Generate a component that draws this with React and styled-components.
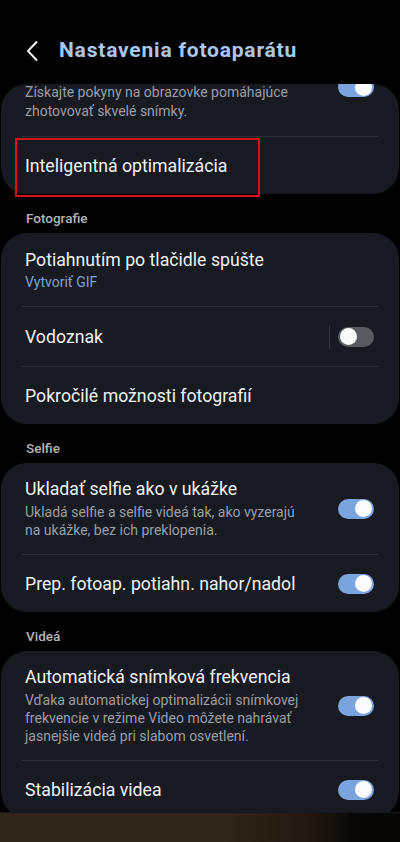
import styled, { createGlobalStyle } from "styled-components";

const GlobalStyle = createGlobalStyle`
  html, body {
    margin: 0;
    padding: 0;
    background: #000;
  }
  body {
    font-family: Roboto, "Noto Sans", "Liberation Sans", sans-serif;
    -webkit-font-smoothing: antialiased;
  }
`

const Page = styled.div`
  width: 400px;
  height: 842px;
  display: flex;
  flex-direction: column;
  background: #000;
  overflow: hidden;
`

const Header = styled.div`
  height: 84px;
  flex-shrink: 0;
  display: flex;
  align-items: center;
  padding: 16px 0 0 22px;
  box-sizing: border-box;
  gap: 17px;
`

const BackBtn = styled.button`
  width: 20px;
  height: 24px;
  padding: 0;
  border: 0;
  background: none;
  display: flex;
  align-items: center;
  justify-content: center;
  margin-top: 1px;
`

const Title = styled.h1`
  margin: 0;
  font-size: 21px;
  font-weight: 700;
  color: #a9c7f0;
  letter-spacing: 0.8px;
`

const Scroll = styled.div`
  flex: 1;
  overflow: hidden;
  border-radius: 26px 26px 0 0;
  margin: 0 1px;
`

const Card = styled.div`
  background: #171a21;
  border-radius: 26px;
  margin-top: ${p => p.$offset || 0}px;
`

const Item = styled.div`
  display: flex;
  align-items: center;
  padding: ${p => p.$pad || "17.5px 25px 17.5px 24px"};
  position: relative;
`

const Divider = styled.div`
  height: 1px;
  margin: 0 21px;
  background: #2b2e35;
`

const Texts = styled.div`
  flex: 1;
  min-width: 0;
`

const ItemTitle = styled.div`
  font-size: 17.7px;
  line-height: 22px;
  color: #f1f2f4;
`

const ItemDesc = styled.div`
  margin-top: ${p => p.$lead ? 0 : 3}px;
  font-size: 14px;
  line-height: ${p => p.$lh || 18}px;
  color: #9c9ea3;
`

const Link = styled.div`
  margin-top: 2px;
  font-size: 14px;
  line-height: 18px;
  color: #7aa3d8;
`

const Section = styled.div`
  padding: 15px 25px 6px;
  font-size: 13.5px;
  line-height: 18px;
  font-weight: 500;
  color: #b4b5b8;
`

const Sep = styled.div`
  width: 1px;
  height: 24px;
  background: #30333a;
  margin-right: 8px;
`

const Track = styled.div`
  width: 36px;
  height: 20px;
  border-radius: 10px;
  background: ${p => (p.$on ? "#7ba4de" : "#595b60")};
  display: flex;
  align-items: center;
  justify-content: ${p => (p.$on ? "flex-end" : "flex-start")};
  padding: 0 2px;
  box-sizing: border-box;
  flex-shrink: 0;
  margin-left: 12px;
  align-self: ${p => (p.$top ? "flex-start" : "center")};
  margin-top: ${p => (p.$top ? "-6px" : "0")};
  ${Sep} + & {
    margin-left: 0;
  }
`

const Thumb = styled.div`
  width: 17px;
  height: 17px;
  border-radius: 50%;
  background: #fbfbfd;
`

const Highlight = styled.div`
  position: absolute;
  left: 14px;
  top: 1px;
  width: 245px;
  height: 59px;
  border: 2px solid #d3141c;
  box-sizing: border-box;
  pointer-events: none;
`

const BottomBar = styled.div`
  height: 29px;
  flex-shrink: 0;
  background: linear-gradient(90deg, #2f251a 0%, #30261b 55%, #20170f 78%, #0a0807 88%, #080605 100%);
  border-top: 1px solid #15171c;
`

const Toggle = ({ on, top }) => (
  <Track $on={on} $top={top}>
    <Thumb />
  </Track>
)

const Chevron = () => (
  <svg width="14" height="22" viewBox="0 0 14 22" fill="none">
    <path d="M11.5 2 L3 11 L11.5 20" stroke="#f2f2f2" strokeWidth="2" strokeLinecap="round" strokeLinejoin="round" />
  </svg>
)

const App = () => {
  return (
    <Page>
      <GlobalStyle />
      <Header>
        <BackBtn><Chevron /></BackBtn>
        <Title>Nastavenia fotoaparátu</Title>
      </Header>
      <Scroll>
        <Card $offset={-1}>
          <Item $pad="0 25px 15px 24px">
            <Texts>
              <ItemDesc $lead $lh={19}>
                Získajte pokyny na obrazovke pomáhajúce<br />zhotovovať skvelé snímky.
              </ItemDesc>
            </Texts>
            <Toggle on top />
          </Item>
          <Divider />
          <Item>
            <Texts>
              <ItemTitle>Inteligentná optimalizácia</ItemTitle>
            </Texts>
            <Highlight />
          </Item>
        </Card>

        <Section>Fotografie</Section>
        <Card>
          <Item $pad="16px 25px 15px 24px">
            <Texts>
              <ItemTitle>Potiahnutím po tlačidle spúšte</ItemTitle>
              <Link>Vytvoriť GIF</Link>
            </Texts>
          </Item>
          <Divider />
          <Item>
            <Texts>
              <ItemTitle>Vodoznak</ItemTitle>
            </Texts>
            <Sep />
            <Toggle on={false} />
          </Item>
          <Divider />
          <Item>
            <Texts>
              <ItemTitle>Pokročilé možnosti fotografií</ItemTitle>
            </Texts>
          </Item>
        </Card>

        <Section>Selfie</Section>
        <Card>
          <Item $pad="15px 25px 15px 24px">
            <Texts>
              <ItemTitle>Ukladať selfie ako v ukážke</ItemTitle>
              <ItemDesc>
                Ukladá selfie a selfie videá tak, ako vyzerajú<br />na ukážke, bez ich preklopenia.
              </ItemDesc>
            </Texts>
            <Toggle on />
          </Item>
          <Divider />
          <Item>
            <Texts>
              <ItemTitle>Prep. fotoap. potiahn. nahor/nadol</ItemTitle>
            </Texts>
            <Toggle on />
          </Item>
        </Card>

        <Section>Videá</Section>
        <Card>
          <Item $pad="15px 25px 15px 24px">
            <Texts>
              <ItemTitle>Automatická snímková frekvencia</ItemTitle>
              <ItemDesc>
                Vďaka automatickej optimalizácii snímkovej<br />frekvencie v režime Video môžete nahrávať<br />jasnejšie videá pri slabom osvetlení.
              </ItemDesc>
            </Texts>
            <Toggle on />
          </Item>
          <Divider />
          <Item>
            <Texts>
              <ItemTitle>Stabilizácia videa</ItemTitle>
            </Texts>
            <Toggle on />
          </Item>
        </Card>
      </Scroll>
      <BottomBar />
    </Page>
  )
};

export default App;
